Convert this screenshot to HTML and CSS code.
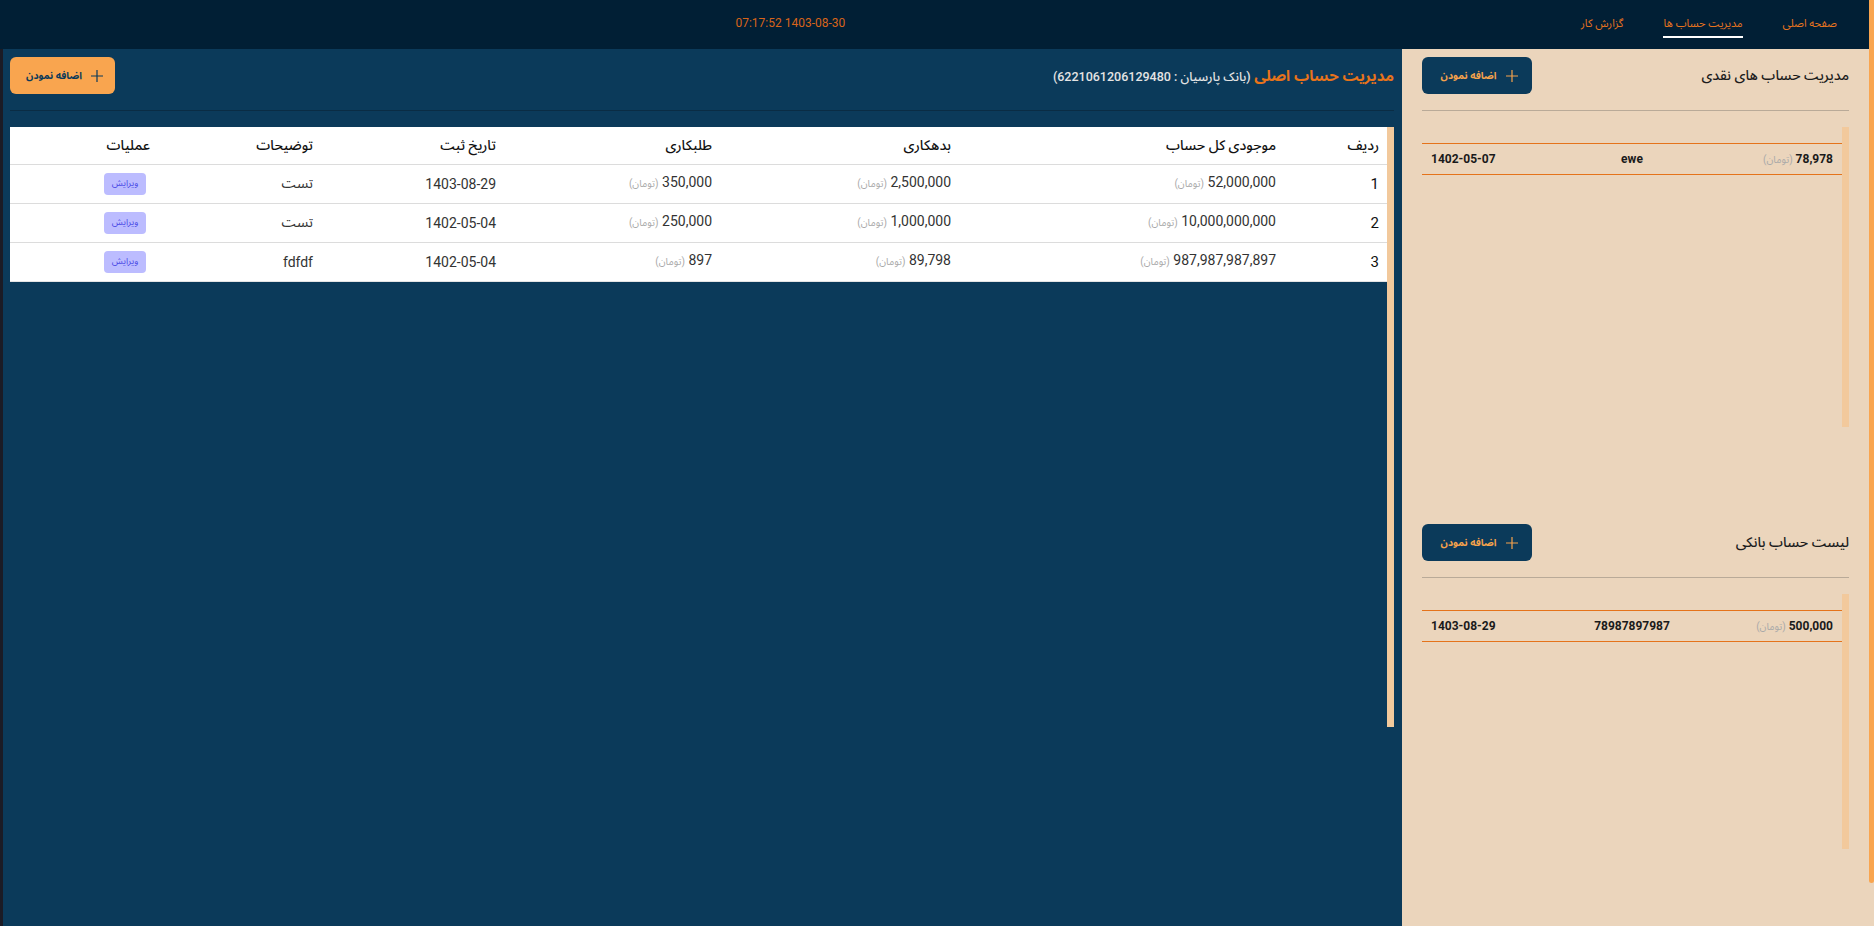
FILE: index.html
```html
<!DOCTYPE html>
<html lang="fa" dir="rtl">
<head>
<meta charset="utf-8">
<title>مدیریت حساب ها</title>
<link rel="stylesheet" href="styles.css">
</head>
<body>
<div class="page">
  <div class="vscroll"><div class="vthumb"></div></div>
  <div class="app">
    <header class="topbar">
      <nav class="nav">
        <a class="nav-item">صفحه اصلی</a>
        <a class="nav-item active">مدیریت حساب ها</a>
        <a class="nav-item">گزارش کار</a>
      </nav>
      <div class="clock-wrap"><span class="clock" dir="ltr">07:17:52 1403-08-30</span></div>
    </header>
    <div class="layout">
      <aside class="sidebar">
        <section class="side-section">
          <div class="side-head">
            <h2 class="side-title">مدیریت حساب های نقدی</h2>
            <button class="btn btn-navy">
              <svg class="plus" viewBox="0 0 12 12" width="12" height="12"><path d="M6 0v12M0 6h12" stroke="currentColor" stroke-width="1.2" fill="none"/></svg>
              <span>اضافه نمودن</span>
            </button>
          </div>
          <div class="side-sep"></div>
          <div class="side-list list-cash">
            <div class="side-row">
              <span class="sr-amount"><b>78,978</b> <span class="unit">(تومان)</span></span>
              <span class="sr-name">ewe</span>
              <span class="sr-date">1402-05-07</span>
            </div>
          </div>
        </section>
        <section class="side-section second">
          <div class="side-head">
            <h2 class="side-title">لیست حساب بانکی</h2>
            <button class="btn btn-navy">
              <svg class="plus" viewBox="0 0 12 12" width="12" height="12"><path d="M6 0v12M0 6h12" stroke="currentColor" stroke-width="1.2" fill="none"/></svg>
              <span>اضافه نمودن</span>
            </button>
          </div>
          <div class="side-sep"></div>
          <div class="side-list list-bank">
            <div class="side-row">
              <span class="sr-amount"><b>500,000</b> <span class="unit">(تومان)</span></span>
              <span class="sr-name">78987897987</span>
              <span class="sr-date">1403-08-29</span>
            </div>
          </div>
        </section>
      </aside>
      <main class="main">
        <div class="main-head">
          <h1 class="main-title">مدیریت حساب اصلی <span class="main-sub">(بانک پارسیان : 6221061206129480)</span></h1>
          <button class="btn btn-orange">
            <svg class="plus" viewBox="0 0 12 12" width="12" height="12"><path d="M6 0v12M0 6h12" stroke="currentColor" stroke-width="1.2" fill="none"/></svg>
            <span>اضافه نمودن</span>
          </button>
        </div>
        <div class="main-sep"></div>
        <div class="table-wrap">
          <table class="grid">
            <colgroup>
              <col class="c1"><col class="c2"><col class="c3"><col class="c4"><col class="c5"><col class="c6"><col class="c7">
            </colgroup>
            <thead>
              <tr><th>ردیف</th><th>موجودی کل حساب</th><th>بدهکاری</th><th>طلبکاری</th><th>تاریخ ثبت</th><th>توضیحات</th><th>عملیات</th></tr>
            </thead>
            <tbody>
              <tr>
                <td class="idx">1</td>
                <td><span class="num">52,000,000</span> <span class="unit">(تومان)</span></td>
                <td><span class="num">2,500,000</span> <span class="unit">(تومان)</span></td>
                <td><span class="num">350,000</span> <span class="unit">(تومان)</span></td>
                <td>1403-08-29</td>
                <td>تست</td>
                <td><button class="edit">ویرایش</button></td>
              </tr>
              <tr>
                <td class="idx">2</td>
                <td><span class="num">10,000,000,000</span> <span class="unit">(تومان)</span></td>
                <td><span class="num">1,000,000</span> <span class="unit">(تومان)</span></td>
                <td><span class="num">250,000</span> <span class="unit">(تومان)</span></td>
                <td>1402-05-04</td>
                <td>تست</td>
                <td><button class="edit">ویرایش</button></td>
              </tr>
              <tr>
                <td class="idx">3</td>
                <td><span class="num">987,987,987,897</span> <span class="unit">(تومان)</span></td>
                <td><span class="num">89,798</span> <span class="unit">(تومان)</span></td>
                <td><span class="num">897</span> <span class="unit">(تومان)</span></td>
                <td>1402-05-04</td>
                <td>fdfdf</td>
                <td><button class="edit">ویرایش</button></td>
              </tr>
            </tbody>
          </table>
        </div>
      </main>
    </div>
  </div>
</div>
</body>
</html>
```
FILE: styles.css
```css
* { box-sizing: border-box; }

html, body { height: 100%; }

body {
  margin: 0;
  overflow: hidden;
  font-family: Roboto, "Noto Sans Arabic", "DejaVu Sans", sans-serif;
  color: #222;
  background: #ebd5bc;
}

.page {
  display: flex;
  height: 926px;
}

/* page scrollbar look-alike (right edge) */
.vscroll {
  width: 5px;
  flex: none;
  background: #ebd5bc;
}
.vthumb {
  height: 883px;
  background: #f9a54f;
  border-radius: 0 0 3px 3px;
}

.app {
  flex: 1;
  display: flex;
  flex-direction: column;
  min-width: 0;
}

.topbar {
  height: 49px;
  flex: none;
  background: #011f35;
  display: flex;
  align-items: stretch;
  padding-right: 32px;
}
.nav {
  display: flex;
  gap: 40px;
  align-items: stretch;
}
.nav-item {
  color: #e8741f;
  font-size: 11px;
  display: flex;
  align-items: flex-start;
  padding-top: 12px;
  height: 38px;
  cursor: pointer;
}
.nav-item.active {
  border-bottom: 2px solid #ffffff;
}
.clock-wrap {
  flex: 1;
  display: flex;
  justify-content: center;
  align-items: center;
  padding-bottom: 4px;
}
.clock {
  color: #d8641a;
  font-size: 12px;
  font-family: Roboto, sans-serif;
}

.layout {
  flex: 1;
  display: flex;
}

.sidebar {
  width: 467px;
  flex: none;
  background: #ebd5bc;
  padding: 8px 20px 0 20px;
}
.side-section.second { margin-top: 97px; }
.side-head {
  display: flex;
  justify-content: space-between;
  align-items: center;
  height: 37px;
}
.side-title {
  margin: 0;
  font-size: 14px;
  font-weight: 500;
  color: #1c1c1c;
}
.side-sep {
  height: 1px;
  background: #b9aa98;
  margin-top: 16px;
}
.side-list {
  margin-top: 16px;
  border-right: 7px solid #f2c99c;
  padding-top: 16px;
}
.list-cash { height: 300px; }
.list-bank { height: 255px; }
.side-row {
  display: grid;
  grid-template-columns: 1fr 1fr 1fr;
  align-items: center;
  height: 32px;
  border-top: 1px solid #e5731a;
  border-bottom: 1px solid #e5731a;
  padding: 0 9px;
  font-size: 12px;
  font-weight: 700;
  color: #1a1a1a;
}
.sr-amount { text-align: right; }
.sr-amount b { font-weight: 700; }
.sr-name { text-align: center; }
.sr-date { text-align: left; }

.btn {
  display: flex;
  align-items: center;
  justify-content: center;
  gap: 9px;
  width: 110px;
  height: 37px;
  border: none;
  border-radius: 6px;
  font-family: inherit;
  font-size: 10px;
  font-weight: 700;
  padding: 0 0 0 4px;
  cursor: pointer;
}
.btn-navy { background: #0b3a5a; color: #f5a24c; }
.btn-orange { background: #f9a54f; color: #0b3a5a; width: 105px; }
.plus { display: block; }

.main {
  flex: 1;
  min-width: 0;
  background: #0b3a5a;
  border-left: 3px solid #1b1b25;
  padding: 8px 8px 0 7px;
}
.main-head {
  display: flex;
  justify-content: space-between;
  align-items: center;
  height: 37px;
}
.main-title {
  margin: 0;
  font-size: 15px;
  font-weight: 700;
  color: #e8731a;
}
.main-sub {
  font-size: 12.5px;
  font-weight: 500;
  color: #e4e4e4;
}
.main-sep {
  height: 1px;
  background: #0a2c44;
  margin-top: 16px;
}
.table-wrap {
  margin-top: 16px;
  height: 600px;
  border-right: 7px solid #f2c99c;
}
.grid {
  width: 100%;
  border-collapse: collapse;
  table-layout: fixed;
  background: #ffffff;
}
.c1 { width: 103px; }
.c2 { width: 325px; }
.c3 { width: 239px; }
.c4 { width: 216px; }
.c5 { width: 183px; }
.c6 { width: 163px; }
.c7 { width: 148px; }
.grid th {
  height: 37px;
  padding: 0 8px;
  text-align: right;
  font-size: 14px;
  font-weight: 500;
  color: #111;
  border-bottom: 1px solid #dcdcdc;
}
.grid td {
  height: 39px;
  padding: 0 8px;
  text-align: right;
  font-size: 14px;
  color: #333;
  border-bottom: 1px solid #dcdcdc;
}
.grid tbody tr:last-child td { border-bottom: 1px solid #e4e4e4; }
.grid td.idx { color: #111; font-size: 15px; }
.unit {
  font-size: 10px;
  color: #a9a9a9;
  font-weight: 400;
}
.edit {
  width: 42px;
  height: 22px;
  border: none;
  border-radius: 4px;
  background: #bcbcff;
  color: #4a4ae6;
  font-family: inherit;
  font-size: 9px;
  padding: 0;
  margin-right: 4px;
  cursor: pointer;
}
```
